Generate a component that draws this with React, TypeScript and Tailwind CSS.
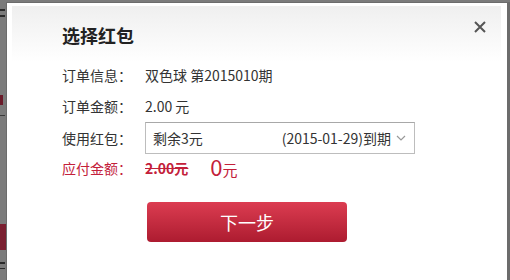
import React from "react";

export default function App() {
  const font = { fontFamily: '"Noto Sans CJK SC", "Liberation Sans", sans-serif' };
  return (
    <div className="flex h-[280px] w-[510px] overflow-hidden bg-[#7b7b7b]" style={font}>
      {/* dimmed page strip on the left */}
      <div className="flex w-[6px] shrink-0 flex-col">
        <div className="mt-[9px] h-[2px] w-[5px] bg-[#2a2a2a]" />
        <div className="mt-[4px] h-[2px] w-[5px] bg-[#2a2a2a]" />
        <div className="mt-[78px] h-[10px] w-[3px] bg-[#6a1b2a]" />
        <div className="mt-[10px] h-[1px] w-[5px] border-t border-dashed border-[#3a3a3a]" />
        <div className="mt-[108px] h-[26px] w-[6px] bg-[#7a1f30]" />
        <div className="mt-[12px] h-[2px] w-[5px] bg-[#2a2a2a]" />
        <div className="mt-[4px] h-[1px] w-[5px] border-t border-dashed border-[#2a2a2a]" />
      </div>
      {/* dialog */}
      <div className="mt-[2px] flex flex-1 flex-col border-l border-r-[3px] border-t border-[#6c6c6c] bg-white pl-[5px] pr-[6px] pt-[3px]">
        <div className="flex h-[56px] items-start justify-between bg-gradient-to-b from-[#efefef] to-[#ffffff]">
          <div className="pl-[50px] pt-[17px] text-[18px] font-bold leading-[24px] text-[#222]">选择红包</div>
          <button className="mr-[15px] mt-[15px] flex h-[12px] w-[12px] items-center justify-center">
            <svg width="12" height="12" viewBox="0 0 12 12">
              <path d="M1 1 L11 11 M11 1 L1 11" stroke="#555" strokeWidth="2" />
            </svg>
          </button>
        </div>
        <div className="flex flex-col pl-[50px] pt-[1px] text-[14px] text-[#333]">
          <div className="flex h-[24px] items-center">
            <span className="w-[83px]">订单信息：</span>
            <span>双色球 第2015010期</span>
          </div>
          <div className="mt-[7px] flex h-[24px] items-center">
            <span className="w-[83px]">订单金额：</span>
            <span>2.00 元</span>
          </div>
          <div className="mt-[4px] flex h-[32px] items-center">
            <span className="w-[83px]">使用红包：</span>
            <div className="flex h-[32px] w-[270px] items-center border border-[#bdbdbd] border-t-[#a8a8a8] bg-white pl-[7px] pr-[8px]">
              <span>剩余3元</span>
              <span className="ml-auto">(2015-01-29)到期</span>
              <svg className="ml-[5px]" width="10" height="6" viewBox="0 0 10 6">
                <path d="M1 1 L5 5 L9 1" stroke="#999" strokeWidth="1.2" fill="none" />
              </svg>
            </div>
          </div>
          <div className="flex h-[28px] items-center text-[#c3203a]">
            <span className="w-[83px]">应付金额：</span>
            <span className="font-bold line-through">2.00元</span>
            <span className="ml-[22px] flex items-baseline">
              <span className="text-[22px] leading-none">0</span>
              <span className="text-[15px]">元</span>
            </span>
          </div>
          <button className="ml-[85px] mt-[20px] h-[40px] w-[200px] rounded-[4px] bg-gradient-to-b from-[#dc3c51] to-[#ad1b30] text-[18px] text-white">
            下一步
          </button>
        </div>
      </div>
    </div>
  );
}
